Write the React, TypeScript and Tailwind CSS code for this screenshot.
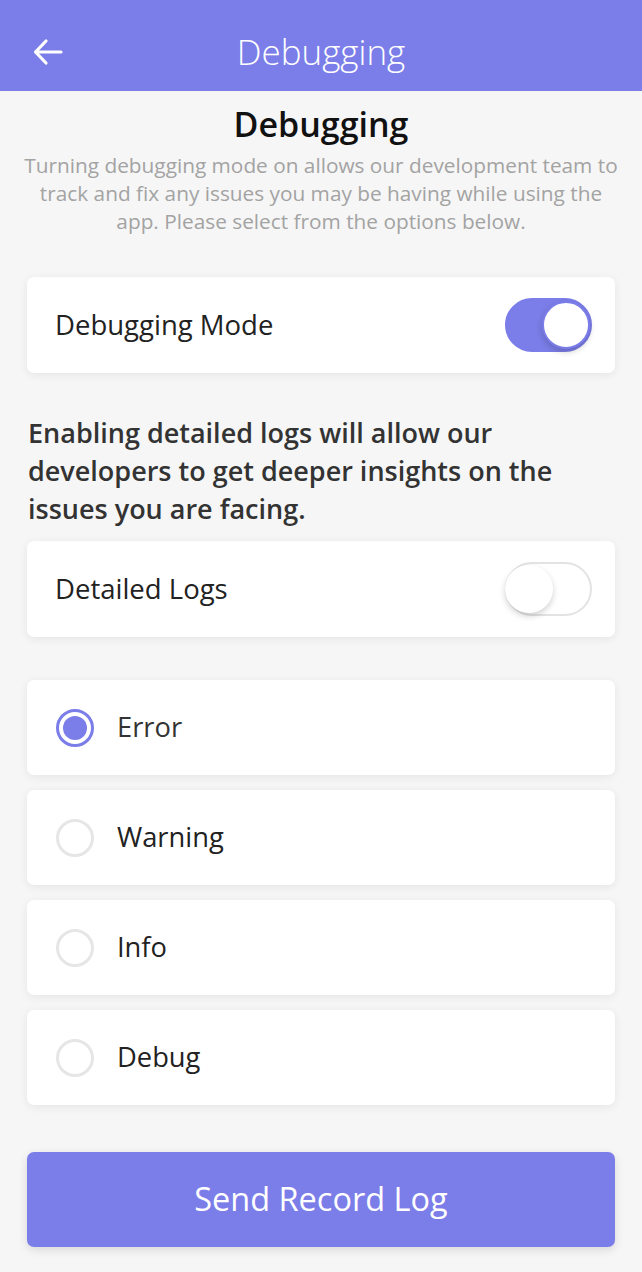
import { useState } from 'react'

const PURPLE = '#7b7de8'

function Toggle({ on, onChange }: { on: boolean; onChange: () => void }) {
  return (
    <button
      onClick={onChange}
      className={`relative w-[87px] h-[54px] rounded-full border-2 ${on ? 'bg-[#7b7de8] border-[#7b7de8]' : 'bg-white border-[#e3e3e3]'}`}
    >
      <span
        className={`absolute top-[1px] w-[48px] h-[48px] rounded-full bg-white shadow-[0_3px_6px_rgba(0,0,0,0.18)] ${on ? 'right-[0px] border-2 border-[#7b7de8]' : 'left-[-2px]'}`}
      />
    </button>
  )
}

function Radio({ checked }: { checked: boolean }) {
  return (
    <span className={`w-[38px] h-[38px] rounded-full border-[3px] flex items-center justify-center ${checked ? 'border-[#7b7de8]' : 'border-[#e6e6e6]'}`}>
      {checked && <span className="w-[24px] h-[24px] rounded-full bg-[#7b7de8]" />}
    </span>
  )
}

export default function App() {
  const [debug, setDebug] = useState(true)
  const [detailed, setDetailed] = useState(false)
  const [level, setLevel] = useState('Error')
  const levels = ['Error', 'Warning', 'Info', 'Debug']

  return (
    <div className="w-[642px] min-h-[1272px] bg-[#f6f6f6] text-[#222]" style={{ fontFamily: '"Open Sans", "Noto Sans", sans-serif' }}>
      <div className="h-[91px] bg-[#7b7de8] flex items-center relative">
        <svg className="absolute left-[33px] top-[38px]" width="30" height="28" viewBox="0 0 30 28" fill="none" stroke="white" strokeWidth="3.2" strokeLinecap="round" strokeLinejoin="round">
          <path d="M28 14H3M13 3L2.5 14L13 25" />
        </svg>
        <div className="w-full text-center text-white text-[35px] font-light pt-[12px] leading-[48px]">Debugging</div>
      </div>

      <div className="px-[27px]">
        <h1 className="text-center text-[34px] font-semibold text-[#111] mt-[9px] leading-[48px]">Debugging</h1>
        <p className="text-center text-[20.8px] leading-[28px] text-[#a3a3a3] mt-[3px] -mx-[4px]">
          Turning debugging mode on allows our development team to track and fix any issues you may be having while using the app. Please select from the options below.
        </p>

        <div className="mt-[42px] h-[96px] bg-white rounded-[7px] shadow-[0_2px_10px_rgba(0,0,0,0.07)] flex items-center justify-between pl-[28px] pr-[23px]">
          <span className="text-[27.5px]">Debugging Mode</span>
          <Toggle on={debug} onChange={() => setDebug(!debug)} />
        </div>

        <p className="mt-[41px] text-[27px] leading-[38px] font-semibold text-[#333] pl-[1px]">
          Enabling detailed logs will allow our developers to get deeper insights on the issues you are facing.
        </p>

        <div className="mt-[13px] h-[96px] bg-white rounded-[7px] shadow-[0_2px_10px_rgba(0,0,0,0.07)] flex items-center justify-between pl-[28px] pr-[23px]">
          <span className="text-[27.5px]">Detailed Logs</span>
          <Toggle on={detailed} onChange={() => setDetailed(!detailed)} />
        </div>

        <div className="mt-[43px] flex flex-col gap-[15px]">
          {levels.map(l => (
            <button
              key={l}
              onClick={() => setLevel(l)}
              className="h-[95px] bg-white rounded-[7px] shadow-[0_2px_10px_rgba(0,0,0,0.07)] flex items-center pl-[29px] gap-[23px]"
            >
              <Radio checked={level === l} />
              <span className={`text-[27.3px] ${level === l ? 'font-medium text-[#333]' : 'text-[#222]'}`}>{l}</span>
            </button>
          ))}
        </div>

        <button className="mt-[47px] w-full h-[95px] rounded-[7px] text-white text-[32.5px] shadow-[0_3px_10px_rgba(0,0,0,0.12)]" style={{ background: PURPLE }}>
          Send Record Log
        </button>
      </div>
    </div>
  )
}
